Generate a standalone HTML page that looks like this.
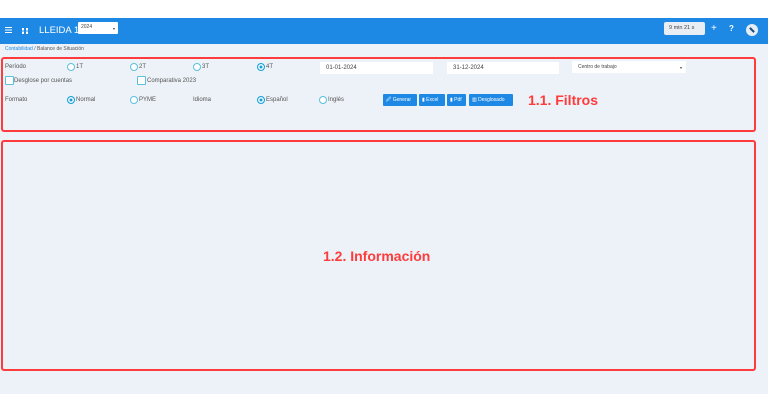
<!DOCTYPE html>
<html><head><style>
*{box-sizing:border-box;margin:0;padding:0}
body{width:768px;height:413px;background:#fff;font-family:"Liberation Sans",sans-serif;position:relative;overflow:hidden}
.a{position:absolute}
.bar{left:0;top:18px;width:768px;height:26px;background:#1e88e5}
.bg{left:0;top:44px;width:768px;height:350px;background:#ecf2f7}
.t{font-size:6px;color:#555;position:absolute}
.r{position:absolute;width:8px;height:8px;border:1px solid #5bc0de;border-radius:50%;background:#fff}
.r.on{background:#17a2d6;border-color:#17a2d6;box-shadow:inset 0 0 0 1.5px #fff}
.cb{position:absolute;width:9px;height:9px;border:1px solid #5bc0de;border-radius:1px;background:#fff}
.in{position:absolute;background:#fff;height:12px;font-size:6px;color:#444;padding:3px 6px}
.btn{position:absolute;top:94px;height:12px;background:#1e88e5;color:#fff;font-size:5px;padding:3px 3px;border-radius:1px}
.box{position:absolute;border:2px solid #ff3b3b;border-radius:3px}
.lbl{position:absolute;color:#ff3b3b;font-weight:bold;font-size:14px}
</style></head><body>
<div class="a bar"></div>
<div class="a" style="left:5px;top:27px;width:7px;height:1.4px;background:#fff;box-shadow:0 2.5px #fff,0 5px #fff"></div>
<div class="a" style="left:22px;top:28px;width:6px;height:6px;background:linear-gradient(#fff 0 40%,transparent 40% 60%,#fff 60%)"></div>
<div class="a" style="left:24px;top:28px;width:1.5px;height:6px;background:#1e88e5"></div>
<div class="a" style="left:39px;top:25px;color:#fff;font-size:9.5px">LLEIDA 1</div>
<div class="a" style="left:78px;top:22px;width:40px;height:12px;background:#fff;border-radius:1px;font-size:5px;color:#444;padding:2px 3px">2024<span style="position:absolute;right:3px;top:4px;font-size:4px">▾</span></div>
<div class="a" style="left:664px;top:22px;width:41px;height:13px;background:#e8eef3;border-radius:2px;font-size:5.5px;color:#444;padding:3px 5px">9 min 21 s</div>
<div class="a" style="left:711px;top:23px;color:#fff;font-size:10px">+</div>
<div class="a" style="left:729px;top:24px;color:#fff;font-size:8px;font-weight:bold">?</div>
<div class="a" style="left:746px;top:24px;width:12px;height:12px;border-radius:50%;background:#e6eef5"></div>
<div class="a" style="left:749px;top:29px;width:6px;height:2px;background:#1e4a7a;transform:rotate(45deg)"></div>
<div class="a bg"></div>
<div class="t" style="left:5px;top:46px;font-size:5px"><span style="color:#1e88e5">Contabilidad</span> / Balance de Situación</div>
<div class="box" style="left:1px;top:57px;width:755px;height:75px"></div>
<div class="t" style="left:5px;top:64px">Período</div>
<div class="r" style="left:67px;top:63px"></div><div class="t" style="left:76px;top:64px">1T</div>
<div class="r" style="left:130px;top:63px"></div><div class="t" style="left:139px;top:64px">2T</div>
<div class="r" style="left:193px;top:63px"></div><div class="t" style="left:202px;top:64px">3T</div>
<div class="r on" style="left:257px;top:63px"></div><div class="t" style="left:266px;top:64px">4T</div>
<div class="in" style="left:320px;top:62px;width:113px">01-01-2024</div>
<div class="in" style="left:447px;top:62px;width:112px">31-12-2024</div>
<div class="in" style="left:572px;top:61px;width:114px;font-size:5px">Centro de trabajo<span style="position:absolute;right:4px;top:4px;font-size:4px">▾</span></div>
<div class="cb" style="left:5px;top:76px"></div><div class="t" style="left:14px;top:78px">Desglose por cuentas</div>
<div class="cb" style="left:137px;top:76px"></div><div class="t" style="left:147px;top:78px">Comparativa 2023</div>
<div class="t" style="left:5px;top:97px">Formato</div>
<div class="r on" style="left:67px;top:96px"></div><div class="t" style="left:76px;top:97px">Normal</div>
<div class="r" style="left:130px;top:96px"></div><div class="t" style="left:139px;top:97px">PYME</div>
<div class="t" style="left:193px;top:97px">Idioma</div>
<div class="r on" style="left:257px;top:96px"></div><div class="t" style="left:266px;top:97px">Español</div>
<div class="r" style="left:319px;top:96px"></div><div class="t" style="left:328px;top:97px">Inglés</div>
<div class="btn" style="left:383px;width:34px">🖉 Generar</div>
<div class="btn" style="left:419px;width:26px">▮ Excel</div>
<div class="btn" style="left:447px;width:19px">▮ Pdf</div>
<div class="btn" style="left:469px;width:44px">▥ Desglosado</div>
<div class="lbl" style="left:528px;top:92px">1.1. Filtros</div>
<div class="box" style="left:1px;top:140px;width:755px;height:231px"></div>
<div class="lbl" style="left:323px;top:248px">1.2. Información</div>
</body></html>
